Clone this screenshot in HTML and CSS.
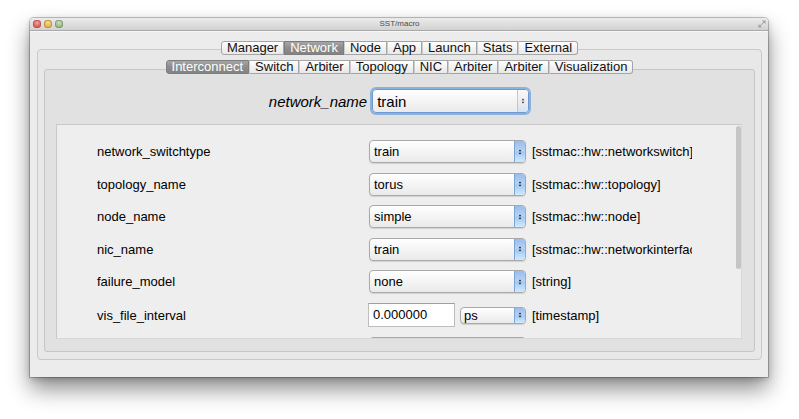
FILE: index.html
```html
<!DOCTYPE html>
<html>
<head>
<meta charset="utf-8">
<title>SST/macro</title>
<link rel="stylesheet" href="styles.css">
</head>
<body>
<div class="window">
  <div class="titlebar">
    <div class="lights">
      <span class="light red"></span><span class="light yellow"></span><span class="light green"></span>
    </div>
    <div class="title">SST/macro</div>
    <svg class="resize" width="8" height="8" viewBox="0 0 8 8">
      <path d="M1.5 6.5 L6.5 1.5" stroke="#a0a0a0" stroke-width="1"/>
      <path d="M4 0.5 H7.5 V4 Z" fill="#a0a0a0"/>
      <path d="M0.5 4 V7.5 H4 Z" fill="#a0a0a0"/>
    </svg>
  </div>
  <div class="body">
    <div class="tabbar">
      <div class="tabs">
        <span class="tab">Manager</span><span class="tab active">Network</span><span class="tab">Node</span><span class="tab">App</span><span class="tab">Launch</span><span class="tab">Stats</span><span class="tab">External</span>
      </div>
    </div>
    <div class="frame outer-frame">
      <div class="tabbar">
        <div class="tabs">
          <span class="tab active">Interconnect</span><span class="tab">Switch</span><span class="tab">Arbiter</span><span class="tab">Topology</span><span class="tab">NIC</span><span class="tab">Arbiter</span><span class="tab">Arbiter</span><span class="tab">Visualization</span>
        </div>
      </div>
      <div class="frame inner-frame">
        <div class="netrow">
          <span class="netlabel">network_name</span>
          <div class="select big focus"><span class="val">train</span><span class="arrow plain"><svg width="4" height="8" viewBox="0 0 4 8"><path d="M2 1.5 L3.4 3.3 H0.6 Z M2 6.5 L3.4 4.7 H0.6 Z" fill="#333"/></svg></span></div>
        </div>
        <div class="scroll">
          <div class="row">
            <span class="label">network_switchtype</span>
            <div class="select"><span class="val">train</span><span class="arrow"><svg width="4" height="8" viewBox="0 0 4 8"><path d="M2 1.5 L3.4 3.3 H0.6 Z M2 6.5 L3.4 4.7 H0.6 Z" fill="#1a1a1a"/></svg></span></div>
            <span class="type">[sstmac::hw::networkswitch]</span>
          </div>
          <div class="row">
            <span class="label">topology_name</span>
            <div class="select"><span class="val">torus</span><span class="arrow"><svg width="4" height="8" viewBox="0 0 4 8"><path d="M2 1.5 L3.4 3.3 H0.6 Z M2 6.5 L3.4 4.7 H0.6 Z" fill="#1a1a1a"/></svg></span></div>
            <span class="type">[sstmac::hw::topology]</span>
          </div>
          <div class="row">
            <span class="label">node_name</span>
            <div class="select"><span class="val">simple</span><span class="arrow"><svg width="4" height="8" viewBox="0 0 4 8"><path d="M2 1.5 L3.4 3.3 H0.6 Z M2 6.5 L3.4 4.7 H0.6 Z" fill="#1a1a1a"/></svg></span></div>
            <span class="type">[sstmac::hw::node]</span>
          </div>
          <div class="row">
            <span class="label">nic_name</span>
            <div class="select"><span class="val">train</span><span class="arrow"><svg width="4" height="8" viewBox="0 0 4 8"><path d="M2 1.5 L3.4 3.3 H0.6 Z M2 6.5 L3.4 4.7 H0.6 Z" fill="#1a1a1a"/></svg></span></div>
            <span class="type">[sstmac::hw::networkinterface]</span>
          </div>
          <div class="row">
            <span class="label">failure_model</span>
            <div class="select"><span class="val">none</span><span class="arrow"><svg width="4" height="8" viewBox="0 0 4 8"><path d="M2 1.5 L3.4 3.3 H0.6 Z M2 6.5 L3.4 4.7 H0.6 Z" fill="#1a1a1a"/></svg></span></div>
            <span class="type">[string]</span>
          </div>
          <div class="row tall">
            <span class="label">vis_file_interval</span>
            <div class="combo">
              <div class="input">0.000000</div>
              <div class="select small"><span class="val">ps</span><span class="arrow"><svg width="4" height="8" viewBox="0 0 4 8"><path d="M2 1.5 L3.4 3.3 H0.6 Z M2 6.5 L3.4 4.7 H0.6 Z" fill="#1a1a1a"/></svg></span></div>
            </div>
            <span class="type">[timestamp]</span>
          </div>
          <div class="row">
            <span class="label"></span>
            <div class="select"><span class="val"></span><span class="arrow"><svg width="4" height="8" viewBox="0 0 4 8"><path d="M2 1.5 L3.4 3.3 H0.6 Z M2 6.5 L3.4 4.7 H0.6 Z" fill="#1a1a1a"/></svg></span></div>
            <span class="type"></span>
          </div>
          <div class="scrollbar"></div>
        </div>
      </div>
    </div>
  </div>
</div>
</body>
</html>
```

FILE: styles.css
```css
* { box-sizing: border-box; }

html, body {
  margin: 0;
  padding: 0;
  background: #ffffff;
}

body {
  width: 799px;
  height: 419px;
  overflow: hidden;
  padding: 18px 31px 0 30px;
  font-family: "Liberation Sans", Arial, sans-serif;
  font-size: 13px;
  color: #000;
}

.window {
  width: 738px;
  height: 359px;
  display: flex;
  flex-direction: column;
  background: #ececec;
  border-radius: 4px 4px 0 0;
  box-shadow: 0 0 0 1px rgba(0,0,0,0.22), 0 12px 22px rgba(0,0,0,0.45), 0 2px 6px rgba(0,0,0,0.2);
}

.titlebar {
  flex: none;
  height: 13px;
  display: grid;
  grid-template-columns: 1fr auto 1fr;
  align-items: center;
  padding: 0 2px 0 3px;
  background: linear-gradient(#ebebeb, #d2d2d2);
  border-bottom: 1px solid #a9a9a9;
  border-radius: 4px 4px 0 0;
}

.lights {
  display: flex;
  gap: 3px;
}

.light {
  width: 8px;
  height: 8px;
  border-radius: 50%;
}

.red { background: radial-gradient(circle at 50% 35%, #f4a49c, #dc5d55 60%, #b8443e); box-shadow: inset 0 0 0 0.5px #a84a44; }
.yellow { background: radial-gradient(circle at 50% 35%, #f7dc98, #e3b04a 60%, #c08c2c); box-shadow: inset 0 0 0 0.5px #a8822e; }
.green { background: radial-gradient(circle at 50% 35%, #cfe0c0, #98b585 60%, #6f8e5c); box-shadow: inset 0 0 0 0.5px #6e8a60; }

.title {
  font-size: 8px;
  line-height: 12px;
  color: #4a4a4a;
}

.resize {
  justify-self: end;
}

.body {
  flex: 1;
  min-height: 0;
  display: flex;
  flex-direction: column;
  padding: 9px 6px 17px 7px;
  border-top: 1px solid #f7f7f7;
}

.tabbar {
  flex: none;
  display: flex;
  justify-content: center;
  position: relative;
  z-index: 1;
}

.tabs {
  display: flex;
  height: 14px;
}

.tab {
  padding: 0 5px;
  line-height: 12px;
  font-size: 13px;
  border: 1px solid #a5a5a5;
  border-left: 1px solid #cdcdcd;
  background: linear-gradient(#ffffff, #f2f2f2 50%, #e9e9e9);
  color: #111;
  white-space: nowrap;
}

.tab:first-child {
  border-left-color: #a5a5a5;
  border-radius: 3px 0 0 3px;
}

.tab:last-child {
  border-radius: 0 3px 3px 0;
}

.tab.active {
  background: linear-gradient(#a6a6a6, #8c8c8c 50%, #838383);
  border-color: #7d7d7d;
  color: #ffffff;
}

.frame {
  flex: 1;
  display: flex;
  flex-direction: column;
  min-height: 0;
}

.outer-frame {
  margin-top: -6px;
  padding: 10px 6px 7px 6px;
  border: 1px solid #c9c9c9;
  border-radius: 4px;
  background: #e8e8e8;
}

.inner-frame {
  margin-top: -5px;
  padding: 0 12px 12px 11px;
  border: 1px solid #c6c6c6;
  border-radius: 3px;
  background: #e1e1e1;
}

.netrow {
  flex: none;
  margin-top: 19px;
  height: 24px;
  display: flex;
  justify-content: center;
  align-items: center;
  gap: 5px;
}

.netlabel {
  font-style: italic;
  font-size: 15px;
}

.select {
  width: 157px;
  height: 23px;
  display: flex;
  align-items: center;
  padding-left: 4px;
  border: 1px solid #a9a9a9;
  border-radius: 4px;
  background: linear-gradient(#ffffff, #f4f4f4 50%, #eaeaea);
  box-shadow: 0 1px 1px rgba(0,0,0,0.12);
  overflow: hidden;
}

.select .val {
  flex: 1;
  white-space: nowrap;
}

.arrow {
  flex: none;
  width: 11px;
  align-self: stretch;
  display: flex;
  align-items: center;
  justify-content: center;
  border-left: 1px solid #7ea3d6;
  background: linear-gradient(#98bdec, #b6d1f2 45%, #a3caf4 55%, #d2eafd);
}

.select.big {
  height: 24px;
  font-size: 15px;
  border-color: #6f97cf;
  box-shadow: 0 0 0 2px rgba(110,160,222,0.75);
}

.arrow.plain {
  border-left: 1px solid #c0c8d4;
  background: linear-gradient(#f8f8f8, #ededed 55%, #cfe3f7);
}

.scroll {
  flex: 1;
  min-height: 0;
  margin-top: 11px;
  position: relative;
  overflow: hidden;
  display: flex;
  flex-direction: column;
  gap: 9.5px;
  padding: 15px 0 0 40px;
  border: 1px solid #c8c8c8;
  border-right-color: #d8d8d8;
  border-bottom-color: #d8d8d8;
  background: #eeeeee;
}

.row {
  flex: none;
  display: grid;
  grid-template-columns: 272px 157px 166px;
  align-items: center;
}

.row.tall {
  min-height: 25px;
}

.label {
  white-space: nowrap;
}

.type {
  padding-left: 6px;
  white-space: nowrap;
  overflow: hidden;
}

.combo {
  display: flex;
  align-items: center;
  gap: 5px;
}

.input {
  width: 87px;
  height: 24px;
  margin-left: -1px;
  padding-left: 4px;
  line-height: 21px;
  background: #ffffff;
  border: 1px solid #bdbdbd;
  border-top-color: #9f9f9f;
}

.select.small {
  width: 66px;
  height: 17px;
  padding-left: 3px;
}

.scrollbar {
  position: absolute;
  top: 1px;
  right: 0;
  width: 5px;
  height: 143px;
  border-radius: 3px;
  background: #c5c5c5;
}
```
